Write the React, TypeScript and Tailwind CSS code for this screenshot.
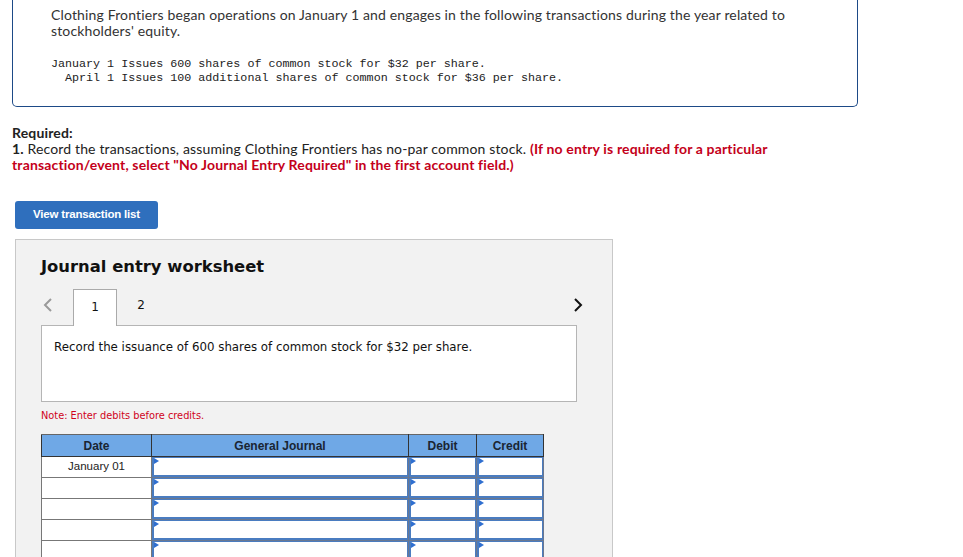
import React from "react";

const sans = "font-['Lato','Open_Sans',sans-serif]";

function InputCell({ w }: { w: string }) {
  return (
    <td className={`${w} p-0 border border-[#6b7890] h-[21px]`}>
      <div className="relative h-[20px] border-t-[1.5px] border-b-2 border-l-2 border-r-[1.5px] border-[#4a7cc0] bg-white">
        <div className="absolute left-0 top-0 w-0 h-0 border-t-[3px] border-b-[3px] border-l-[5px] border-t-transparent border-b-transparent border-l-[#2f6fd0]" />
      </div>
    </td>
  );
}

export default function App() {
  const rows = ["January 01", "", "", "", ""];
  return (
    <div className="w-[963px] h-[557px] overflow-hidden bg-white text-[#222]">
      <div className="ml-[12px] w-[846px] border border-t-0 border-[#1d4a87] rounded-b-[5px] pl-[38px] pt-[7px] pb-[21px]">
        <p className={`${sans} text-[14px] tracking-[0.15px] leading-[16px] text-[#333]`}>
          Clothing Frontiers began operations on January 1 and engages in the following transactions during the year related to
          <br />
          stockholders' equity.
        </p>
        <pre className="mt-[18px] font-['Liberation_Mono',monospace] text-[11.7px] leading-[14px] text-[#222]">
{"January 1 Issues 600 shares of common stock for $32 per share.\n  April 1 Issues 100 additional shares of common stock for $36 per share."}
        </pre>
      </div>

      <div className={`${sans} ml-[12px] mt-[18px] text-[14px] tracking-[0.15px] leading-[16px] text-[#222]`}>
        <div className="font-bold">Required:</div>
        <div>
          <span className="font-bold">1.</span> Record the transactions, assuming Clothing Frontiers has no-par common stock.{" "}
          <span className="font-bold text-[#c4001a]">
            (If no entry is required for a particular
            <br />
            transaction/event, select "No Journal Entry Required" in the first account field.)
          </span>
        </div>
      </div>

      <div className="ml-[15px] mt-[28px] w-[143px] h-[28px] rounded-[3px] bg-[#2f6fbd] flex items-center justify-center">
        <span className="font-['Liberation_Sans',Arial,sans-serif] font-bold text-[11.5px] text-white tracking-[-0.2px]">View transaction list</span>
      </div>

      <div className="ml-[15px] mt-[10px] w-[598px] h-[330px] bg-[#f2f2f2] border border-[#c8c8c8] pl-[25px] pt-[17px]">
        <h2 className="font-['DejaVu_Sans',Verdana,sans-serif] font-bold text-[16.4px] leading-[20px] text-[#111]">
          Journal entry worksheet
        </h2>
        <div className="mt-[11px] w-[535px] flex items-end font-['DejaVu_Sans',Verdana,sans-serif] text-[12px]">
          <div className="w-[32px] h-[37px] flex items-center justify-start pl-[2px] pb-[3px]">
            <svg width="10" height="16" viewBox="0 0 10 16">
              <path d="M8 2 L2 8 L8 14" fill="none" stroke="#9a9a9a" strokeWidth="2" />
            </svg>
          </div>
          <div className="w-[44px] h-[37px] bg-white border border-b-0 border-[#aaa] flex items-center justify-center pb-[3px] relative top-[1px] text-[#111]">
            1
          </div>
          <div className="w-[48px] h-[37px] flex items-center justify-center pb-[3px] text-[#111]">2</div>
          <div className="flex-1" />
          <div className="h-[37px] flex items-center mr-[-7px] pb-[3px]">
            <svg width="10" height="16" viewBox="0 0 10 16">
              <path d="M2 2 L8 8 L2 14" fill="none" stroke="#111" strokeWidth="2" />
            </svg>
          </div>
        </div>
        <div className="w-[536px] h-[77px] bg-white border border-[#b5b5b5] pl-[12px] pt-[13px] font-['DejaVu_Sans',Verdana,sans-serif] text-[11.8px] leading-[16px] text-[#111]">
          Record the issuance of 600 shares of common stock for $32 per share.
        </div>
        <div className="mt-[7px] font-['DejaVu_Sans',Verdana,sans-serif] text-[9.8px] leading-[14px] text-[#d0021b]">
          Note: Enter debits before credits.
        </div>
        <table className="mt-[11px] border-collapse table-fixed font-['Liberation_Sans',Arial,sans-serif] text-[12px]">
          <thead>
            <tr className="bg-[#6fa8e6] h-[22px]">
              <th className="w-[110px] border border-[#333] border-t-[#666] font-bold text-[#1a2533]">Date</th>
              <th className="w-[257px] border border-[#333] border-t-[#666] font-bold text-[#1a2533]">General Journal</th>
              <th className="w-[68px] border border-[#333] border-t-[#666] font-bold text-[#1a2533]">Debit</th>
              <th className="w-[67px] border border-[#333] border-t-[#666] font-bold text-[#1a2533]">Credit</th>
            </tr>
          </thead>
          <tbody>
            {rows.map((d, i) => (
              <tr key={i} className="h-[21px]">
                <td className="w-[110px] border border-[#777] bg-white text-center text-[11.5px] text-[#222] p-0">{d}</td>
                <InputCell w="w-[257px]" />
                <InputCell w="w-[68px]" />
                <InputCell w="w-[67px]" />
              </tr>
            ))}
          </tbody>
        </table>
      </div>
    </div>
  );
}
